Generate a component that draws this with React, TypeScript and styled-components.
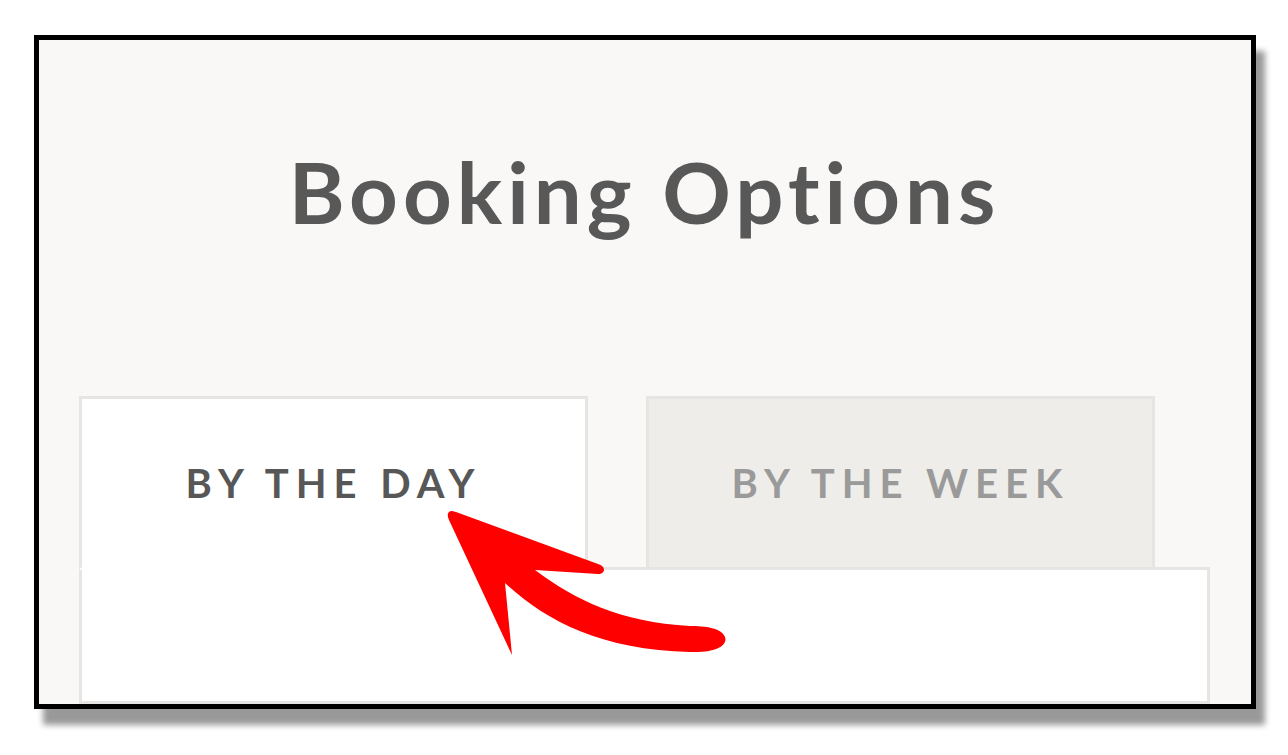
import styled, { createGlobalStyle } from 'styled-components';

const Global = createGlobalStyle`
  html, body {
    margin: 0;
    padding: 0;
    background: #ffffff;
    font-family: Lato, "Open Sans", Arial, sans-serif;
  }
`

const Page = styled.div`
  position: relative;
  width: 1288px;
  height: 755px;
  padding: 35px 0 0 34px;
  box-sizing: border-box;
`

const Frame = styled.div`
  width: 1222px;
  height: 674px;
  box-sizing: border-box;
  border: 5px solid #000;
  background: #f9f8f6;
  box-shadow: 9px 16px 6px rgba(0, 0, 0, 0.4);
  overflow: hidden;
  padding: 0 41px 0 40px;
  display: flex;
  flex-direction: column;
`

const Title = styled.h1`
  margin: 101px 0 0;
  font-size: 85px;
  line-height: 100px;
  font-weight: 700;
  letter-spacing: 5px;
  font-variant-ligatures: none;
  color: #585858;
  text-align: center;
`

const TabRow = styled.div`
  display: flex;
  align-items: flex-end;
  gap: 58px;
  margin-top: 155px;
  position: relative;
  z-index: 1;
`

const Tab = styled.div<{ $active?: boolean }>`
  width: 509px;
  height: 174px;
  box-sizing: border-box;
  display: flex;
  align-items: center;
  justify-content: center;
  border: 3px solid #e6e5e3;
  border-bottom-color: ${(p) => (p.$active ? '#ffffff' : '#e6e5e3')};
  background: ${(p) => (p.$active ? '#ffffff' : '#eeede9')};
  color: ${(p) => (p.$active ? '#575757' : '#9a9a9a')};
  font-size: 40px;
  font-weight: 700;
  letter-spacing: 0.175em;
`

const Panel = styled.div`
  flex: 1;
  margin-top: -3px;
  background: #ffffff;
  border: 3px solid #e6e5e3;
`

const Arrow = styled.svg`
  position: absolute;
  left: 0;
  top: 0;
  z-index: 2;
  pointer-events: none;
`

export default function App() {
  return (
    <Page>
      <Global />
      <Frame>
        <Title>Booking Options</Title>
        <TabRow>
          <Tab $active>BY THE DAY</Tab>
          <Tab>BY THE WEEK</Tab>
        </TabRow>
        <Panel />
      </Frame>
      <Arrow width="1288" height="755" viewBox="0 0 1288 755">
        <path
          fill="#ff0000"
          d="M 452 511 C 447 511, 447 516, 449 520 L 512 655 L 505 583 C 545 620, 600 650, 690 652 C 715 653, 728 646, 725 637 C 722 628, 705 626, 690 626 C 620 622, 575 600, 535 570 L 598 574 C 606 574, 606 566, 598 564 L 456 512 Z"
        />
      </Arrow>
    </Page>
  )
}
